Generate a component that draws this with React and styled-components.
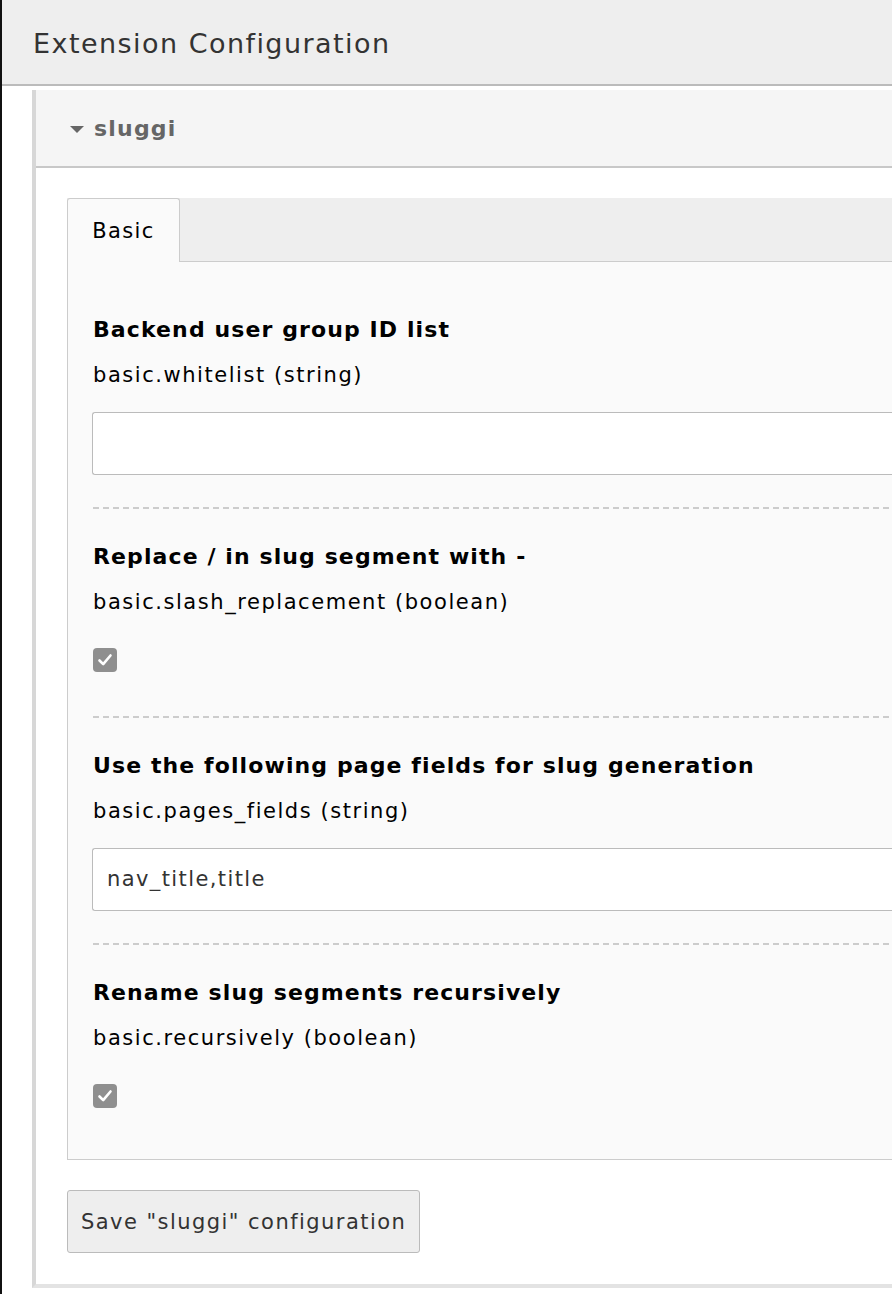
import React from "react";
import styled, { createGlobalStyle } from "styled-components";

const Global = createGlobalStyle`
  html, body { margin: 0; padding: 0; background: #fff; }
  body { font-family: "DejaVu Sans", Verdana, sans-serif; color: #000; overflow: hidden; }
`;

const Viewport = styled.div`
  width: 100vw;
  min-height: 1294px;
  overflow: hidden;
  border-left: 2px solid #111;
  box-sizing: border-box;
`;

const Page = styled.div`
  width: 960px;
`;

const Header = styled.header`
  height: 84px;
  background: #eeeeee;
  border-bottom: 2px solid #bbbbbb;
  display: flex;
  align-items: center;
  padding-left: 31px;
`;

const Title = styled.h1`
  margin: 0 0 -2px;
  font-size: 27px;
  letter-spacing: 1.45px;
  font-weight: normal;
  color: #333;
`;

const Panel = styled.section`
  margin: 4px 0 0 30px;
  border-left: 4px solid #d7d7d7;
  border-bottom: 4px solid #e3e3e3;
`;

const PanelHeading = styled.div`
  height: 76px;
  background: #f5f5f5;
  border-bottom: 2px solid #c8c8c8;
  display: flex;
  align-items: center;
  padding-left: 34px;
  gap: 10px;
  font-size: 22px;
  letter-spacing: 1.2px;
  font-weight: bold;
  color: #666;
`;

const Caret = styled.span`
  width: 0;
  height: 0;
  border-left: 7px solid transparent;
  border-right: 7px solid transparent;
  border-top: 7px solid #666;
  margin-top: 3px;
`;

const PanelBody = styled.div`
  background: #fff;
  padding: 30px 0 31px 31px;
`;

const TabBar = styled.div`
  display: flex;
  height: 63px;
  background: #eeeeee;
  border-bottom: 1px solid #cccccc;
`;

const Tab = styled.div`
  box-sizing: border-box;
  height: 64px;
  width: 113px;
  background: #fafafa;
  border: 1px solid #cccccc;
  border-bottom: none;
  border-top-left-radius: 3px;
  border-top-right-radius: 3px;
  display: flex;
  align-items: center;
  justify-content: center;
  font-size: 21px;
  letter-spacing: 1.4px;
  color: #000;
`;

const TabContent = styled.div`
  background: #fafafa;
  border-left: 1px solid #cccccc;
  border-bottom: 1px solid #cccccc;
  padding: 20px 0 7px 25px;
`;

const Field = styled.div`
  position: relative;
  padding: 31px 0 32px;
  &:not(:last-child)::after {
    content: "";
    position: absolute;
    left: 0;
    right: 0;
    bottom: -2px;
    height: 2px;
    background: repeating-linear-gradient(to right, #cccccc 0 6px, transparent 6px 10px);
  }
  & + & { margin-top: 2px; }
`;

const Label = styled.div`
  font-size: 22px;
  letter-spacing: 1.1px;
  font-weight: bold;
  line-height: 33px;
`;

const Desc = styled.div`
  margin-top: 14px;
  font-size: 21px;
  letter-spacing: 1.55px;
  line-height: 31.5px;
`;

const TextInput = styled.input`
  display: block;
  box-sizing: border-box;
  margin: 20px 0 0 -1px;
  width: 100%;
  height: 63px;
  border: 1px solid #bbbbbb;
  border-right: none;
  border-radius: 3px 0 0 3px;
  background: #fff;
  padding: 0 14px;
  font-family: inherit;
  font-size: 21px;
  letter-spacing: 1.4px;
  color: #333;
  outline: none;
`;

const CheckWrap = styled.div`
  margin-top: 30px;
  margin-bottom: 12px;
  display: flex;
`;

const CheckBox = styled.span`
  width: 24px;
  height: 24px;
  border-radius: 4px;
  background: #8f8f8f;
  display: flex;
  align-items: center;
  justify-content: center;
`;

const Actions = styled.div`
  margin-top: 30px;
  display: flex;
`;

const Button = styled.button`
  box-sizing: border-box;
  height: 63px;
  padding: 0 13px;
  background: #eeeeee;
  border: 1px solid #bbbbbb;
  border-radius: 3px;
  font-family: inherit;
  font-size: 21px;
  letter-spacing: 1.45px;
  color: #333;
`;

const Check = () => (
  <CheckBox>
    <svg width="18" height="18" viewBox="0 0 18 18">
      <path d="M3.5 9.5 L7.2 13.2 L14.5 4.5" fill="none" stroke="#fff" strokeWidth="2.6" strokeLinecap="round" strokeLinejoin="round" />
    </svg>
  </CheckBox>
);

const fields = [
  { label: "Backend user group ID list", desc: "basic.whitelist (string)", type: "text", value: "" },
  { label: "Replace / in slug segment with -", desc: "basic.slash_replacement (boolean)", type: "bool" },
  { label: "Use the following page fields for slug generation", desc: "basic.pages_fields (string)", type: "text", value: "nav_title,title" },
  { label: "Rename slug segments recursively", desc: "basic.recursively (boolean)", type: "bool" },
];

export default function App() {
  return (
    <>
      <Global />
      <Viewport>
        <Page>
          <Header>
            <Title>Extension Configuration</Title>
          </Header>
          <Panel>
            <PanelHeading>
              <Caret />
              <span>sluggi</span>
            </PanelHeading>
            <PanelBody>
              <TabBar>
                <Tab>Basic</Tab>
              </TabBar>
              <TabContent>
                {fields.map((f) => (
                  <Field key={f.desc}>
                    <Label>{f.label}</Label>
                    <Desc>{f.desc}</Desc>
                    {f.type === "text" ? (
                      <TextInput defaultValue={f.value} />
                    ) : (
                      <CheckWrap>
                        <Check />
                      </CheckWrap>
                    )}
                  </Field>
                ))}
              </TabContent>
              <Actions>
                <Button>Save "sluggi" configuration</Button>
              </Actions>
            </PanelBody>
          </Panel>
        </Page>
      </Viewport>
    </>
  );
}
